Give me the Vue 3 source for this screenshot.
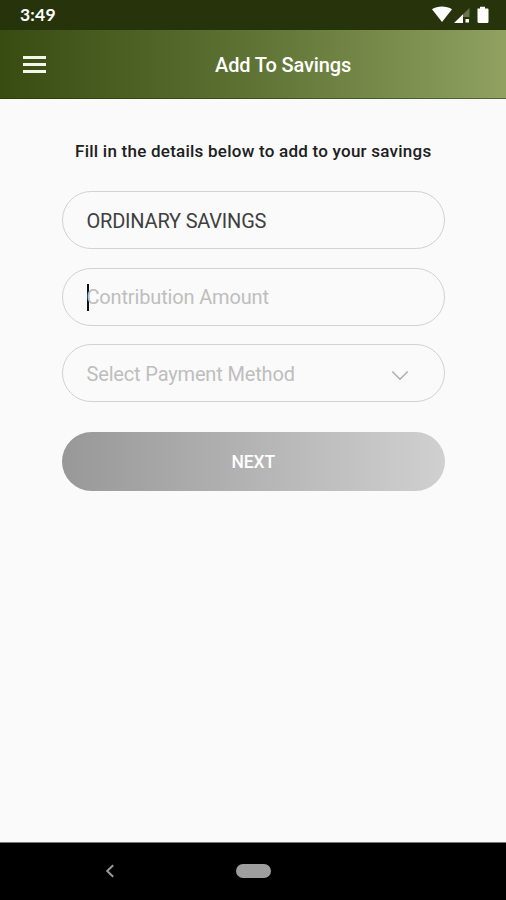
<script setup>
import { ref } from 'vue'

const account = ref('ORDINARY SAVINGS')
</script>

<template>
  <div class="screen">
    <div class="status">
      <span class="time">3:49</span>
      <svg class="status-icons" width="58" height="20" viewBox="0 0 58 20">
        <path d="M0 4.300C5.500.5 14.500.5 20 4.300L10 17Z" fill="#fff" />
        <path d="M37.500 3V12H31V9.300Z" fill="#69714f" />
        <path d="M22 18 31 9.300V18Z" fill="#fff" />
        <rect x="33.500" y="14" width="3.500" height="3.500" fill="#fff" />
        <path d="M45.500 3.500H48V1.800H53V3.500H55.500Q56.500 3.500 56.500 4.500V16.500Q56.500 18 55 18H47Q45.500 18 45.500 16.500Z" fill="#fff" />
      </svg>
    </div>

    <header class="bar">
      <button class="menu" aria-label="Menu"><i></i><i></i><i></i></button>
      <h1>Add To Savings</h1>
    </header>

    <main class="content">
      <p class="lead">Fill in the details below to add to your savings</p>
      <div class="field value"><span>{{ account }}</span></div>
      <div class="field"><i class="caret"></i><span>Contribution Amount</span></div>
      <div class="field">
        <span>Select Payment Method</span>
        <svg class="chevron" width="18" height="12" viewBox="0 0 18 12">
          <path d="M1.300 1.500 9 9.300 16.700 1.500" fill="none" stroke="#a9a9a9" stroke-width="1.300" />
        </svg>
      </div>
      <button class="next">NEXT</button>
    </main>

    <nav class="navbar">
      <svg class="back" width="10" height="14" viewBox="0 0 10 14">
        <path d="M8.200 1.200 2.200 7 8.200 12.800" fill="none" stroke="#999" stroke-width="2" />
      </svg>
      <span class="home"></span>
    </nav>
  </div>
</template>

<style>
body {
  background: #fafafa;
}
</style>

<style scoped>
.screen {
  display: flex;
  flex-direction: column;
  height: 900px;
  overflow: hidden;
  background: #fafafa;
  font-family: Roboto, "Liberation Sans", sans-serif;
}
button {
  border: 0;
  font-family: inherit;
}
.status {
  display: flex;
  justify-content: space-between;
  height: 30px;
  padding: 5px 16px 0 20px;
  box-sizing: border-box;
  background: #26330b;
}
.time {
  color: #fff;
  font: 700 17.500px/20px Lato, sans-serif;
  letter-spacing: 0.2px;
}
.bar {
  display: flex;
  align-items: center;
  height: 69px;
  padding: 0 0 0 23px;
  box-sizing: border-box;
  border-bottom: 1px solid rgba(20, 50, 0, 0.5);
  background: linear-gradient(90deg, #384c12 0%, #5e7334 50%, #90a160 100%);
  background-origin: border-box;
}
.menu {
  display: flex;
  flex-direction: column;
  gap: 4px;
  width: 23px;
  padding: 0;
  background: none;
}
.menu i {
  height: 3px;
  background: #f3f7eb;
}
h1 {
  margin: 2px 0 0 169px;
  color: #fff;
  font-size: 20px;
  font-weight: 500;
  line-height: 24px;
  letter-spacing: -0.13px;
  white-space: nowrap;
}
.content {
  flex: 1;
  display: flex;
  flex-direction: column;
  padding: 40px 61px 0 61.500px;
}
.lead {
  margin: 0 0 28px;
  color: #202020;
  font-size: 17px;
  font-weight: 500;
  line-height: 24px;
  letter-spacing: 0.24px;
  text-align: center;
  white-space: nowrap;
}
.field {
  display: flex;
  align-items: center;
  height: 58px;
  margin-bottom: 18.500px;
  padding: 1px 35.500px 0 24px;
  box-sizing: border-box;
  border: 1.300px solid #d2d2d2;
  border-radius: 29px;
  color: #bebebe;
  font-size: 20px;
  letter-spacing: -0.16px;
}
.value {
  color: #404040;
  letter-spacing: -0.2px;
}
.caret {
  width: 2px;
  height: 27px;
  margin-right: -2px;
  background: #111;
}
.chevron {
  margin: 4px 0 0 auto;
}
.next {
  height: 59px;
  margin-top: 11px;
  padding: 1px 0 0;
  border-radius: 30px;
  background: linear-gradient(90deg, #989898, #d0d0d0);
  color: #fff;
  font-size: 17.500px;
  font-weight: 500;
  letter-spacing: -0.1px;
}
.navbar {
  display: flex;
  align-items: center;
  height: 58px;
  padding: 0 0 2px 105px;
  box-sizing: border-box;
  border-top: 1px solid #777;
  background: #000;
}
.home {
  width: 35px;
  height: 14px;
  margin-left: 121px;
  border-radius: 7px;
  background: #9e9e9e;
}
</style>
